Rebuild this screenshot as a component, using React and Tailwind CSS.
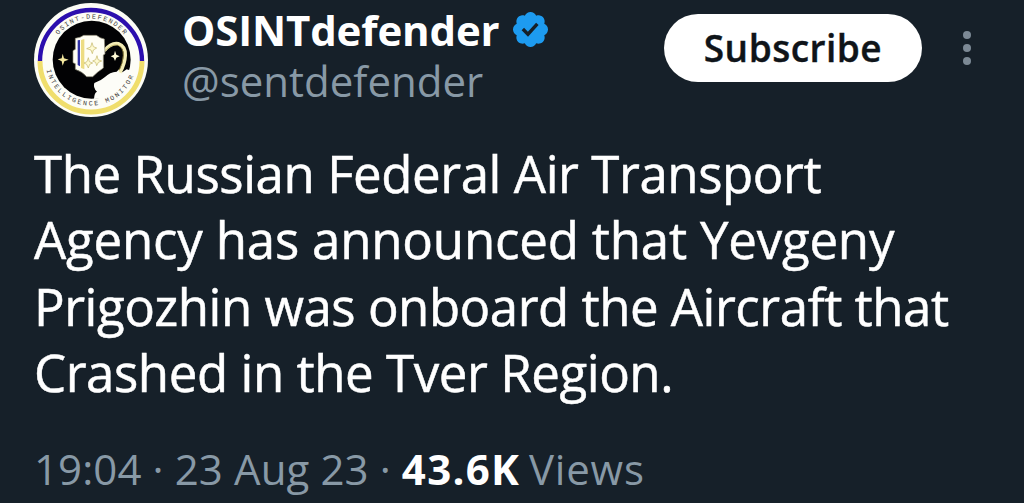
import React from 'react';

const bodyLines = [
  { text: 'The Russian Federal Air Transport', tracking: 'tracking-[-0.43px]' },
  { text: 'Agency has announced that Yevgeny', tracking: 'tracking-[-0.2px]' },
  { text: 'Prigozhin was onboard the Aircraft that', tracking: 'tracking-[-0.49px]' },
  { text: 'Crashed in the Tver Region.', tracking: 'tracking-[-0.44px]' },
];

const Avatar = () => (
  <svg viewBox="23 8 342 342" className="h-[114px] w-[114px] shrink-0" role="img" aria-label="OSINTdefender">
    <defs>
      <path id="arc-top" d="M94 107 A124 124 0 0 1 304 120" />
      <path id="arc-bottom" d="M60 203 A136 136 0 0 0 328 203" />
    </defs>
    <circle cx="194" cy="179" r="171" fill="#fdfdf6" />
    <path d="M41 182 A153 153 0 0 1 347 182" fill="none" stroke="#2c0fae" strokeWidth="13" />
    <path d="M41 182 A153 153 0 0 0 347 182" fill="none" stroke="#f0de6c" strokeWidth="15" />
    <circle cx="196" cy="178" r="117" fill="#020204" />
    <path d="M203 296 Q204 277 212 274 Q199 262 204 248 Q224 241 236 230 Q250 215 271 214 L278 207 L288 216 L301 207 L318 212 Q304 255 276 272 Q244 294 203 296 Z" fill="#fdfdf8" />
    <path d="M234 151 Q254 126 276 130 Q298 138 297 165 Q296 190 281 217" fill="none" stroke="#f4edb6" strokeWidth="10" />
    <path d="M236 151 Q256 131 274 134 Q292 142 291 166 Q289 190 278 211" fill="none" stroke="#bfae50" strokeWidth="2" />
    <path d="M147 114 Q163 112 172 105 L210 105 Q221 114 234 116 L236 161 L231 164 L231 203 Q214 214 199 229 L181 229 Q168 214 147 207 L147 190 L140 187 L140 151 L147 147 Z" fill="#fffef5" stroke="#8e8b75" strokeWidth="2" />
    <path d="M154 120 L161 119 L161 198 L154 194 Z" fill="#3031a5" />
    <path d="M164 119 L174 116 L174 207 L164 203 Z" fill="#eddc82" />
    <path d="M197 127 L201 139 L211 143 L201 149 L198 160 L194 149 L181 145 L193 140 Z M186 172 L189 184 L199 188 L190 192 L186 203 L181 192 L173 188 L182 184 Z M212 166 L215 178 L226 182 L216 186 L211 196 L208 186 L199 182 L208 178 Z" fill="#fffbd3" stroke="#c2b565" strokeWidth="2" />
    <path d="M109 160 L113 174 L127 178 L114 183 L109 196 L106 183 L94 177 L106 174 Z" fill="#f5e9a0" />
    <path d="M266 151 L270 163 L280 168 L270 172 L266 182 L262 172 L253 168 L263 163 Z" fill="#fff9d5" />
    <text className="font-['Liberation_Mono'] text-[20px] tracking-[4.5px]" fill="#3d3c3a">
      <textPath href="#arc-top" startOffset="4">OSINT-DEFENDER</textPath>
    </text>
    <text className="font-['Liberation_Mono'] text-[20px] tracking-[5.7px]" fill="#3d3c3a">
      <textPath href="#arc-bottom" startOffset="6">INTELLIGENCE MONITOR</textPath>
    </text>
  </svg>
);

const VerifiedBadge = () => (
  <svg viewBox="0 0 22 22" className="h-[41px] w-[41px] shrink-0" fill="#1d9bf0" aria-label="Verified account">
    <path d="M20.396 11c-.018-.646-.215-1.275-.57-1.816-.354-.54-.852-.972-1.438-1.246.223-.607.27-1.264.14-1.897-.131-.634-.437-1.218-.882-1.687-.47-.445-1.053-.75-1.687-.882-.633-.13-1.29-.083-1.897.14-.273-.587-.704-1.086-1.245-1.44S11.647 1.62 11 1.604c-.646.017-1.273.213-1.813.568s-.969.854-1.24 1.44c-.608-.223-1.267-.272-1.902-.14-.635.13-1.22.436-1.69.882-.445.47-.749 1.055-.878 1.688-.13.633-.08 1.29.144 1.896-.587.274-1.087.705-1.443 1.245-.356.54-.555 1.17-.574 1.817.02.647.218 1.276.574 1.817.356.54.856.972 1.443 1.245-.224.606-.274 1.263-.144 1.896.13.634.433 1.218.877 1.688.47.443 1.054.747 1.687.878.633.132 1.29.084 1.897-.136.274.586.705 1.084 1.246 1.439.54.354 1.17.551 1.816.569.647-.016 1.276-.213 1.817-.567s.972-.854 1.245-1.44c.604.239 1.266.296 1.903.164.636-.132 1.22-.447 1.68-.907.46-.46.776-1.044.908-1.681s.075-1.299-.165-1.903c.586-.274 1.084-.705 1.439-1.246.354-.54.551-1.17.569-1.816zM9.662 14.85l-3.429-3.428 1.293-1.302 2.072 2.072 4.4-4.794 1.347 1.246z" />
  </svg>
);

const App = () => {
  return (
    <article className="h-[503px] w-[1024px] overflow-hidden bg-[#162029] font-['Open_Sans',sans-serif] text-white">
      <header className="flex h-[140px] items-start pl-[34px]">
        <div className="pt-[3px]">
          <Avatar />
        </div>
        <div className="ml-[34px] w-[482px] pt-1 whitespace-nowrap">
          <div className="flex h-[51px] items-center">
            <h1 className="w-[328px] text-[42px] leading-[51px] font-bold tracking-[-0.15px]">OSINTdefender</h1>
            <VerifiedBadge />
          </div>
          <p className="text-[42px] leading-[51px] text-[#8899a6]">@sentdefender</p>
        </div>
        <button type="button" className="mt-[14px] flex h-[68px] w-[258px] items-center justify-center rounded-full bg-white text-[37px] font-semibold tracking-[0.5px] text-[#0f1419] [-webkit-text-stroke:0.4px_#0f1419]">
          Subscribe
        </button>
        <button type="button" aria-label="More" className="mt-[31px] ml-[41px] flex flex-col gap-[5px]">
          <span className="h-2 w-2 rounded-full bg-[#7c8995]" />
          <span className="h-2 w-2 rounded-full bg-[#7c8995]" />
          <span className="h-2 w-2 rounded-full bg-[#7c8995]" />
        </button>
      </header>

      <div className="pl-[34px] text-[51px] leading-[66.3px] whitespace-nowrap [-webkit-text-stroke:0.5px_#fff]">
        {bodyLines.map((line) => (
          <p key={line.text} className={line.tracking}>{line.text}</p>
        ))}
      </div>

      <footer className="mt-[39px] pl-[34px] text-[42px] leading-[50px] whitespace-nowrap text-[#8899a6]">
        <span className="tracking-[0.1px]">19:04 · 23 Aug 23 · </span>
        <strong className="font-bold tracking-[1.3px] text-white">43.6K</strong>
        <span className="-ml-[3px] tracking-[0.8px]"> Views</span>
      </footer>
    </article>
  );
};

export default App;
